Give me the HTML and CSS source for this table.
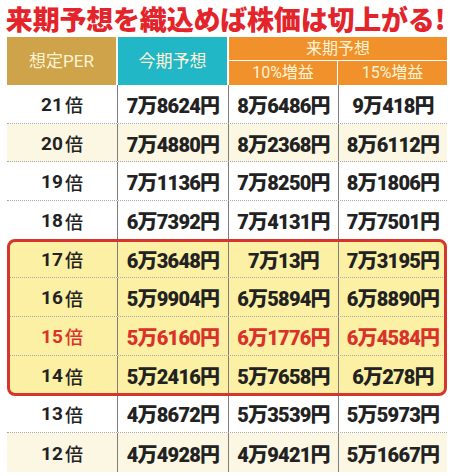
FILE: index.html
```html
<!DOCTYPE html>
<html lang="ja">
<head>
<meta charset="utf-8">
<link rel="stylesheet" href="styles.css">
</head>
<body>
<div class="page">
  <h1 class="title">来期予想を織込めば株価は切上がる!</h1>
  <div class="table">
    <div class="head">
      <div class="h h-per">想定PER</div>
      <div class="h h-now">今期予想</div>
      <div class="h-next">
        <div class="h h-next-top">来期予想</div>
        <div class="h-sub">
          <div class="h h-sub-cell">10%増益</div>
          <div class="h h-sub-cell">15%増益</div>
        </div>
      </div>
    </div>

    <div class="row"><div class="c c1">21<span class="bai">倍</span></div><div class="c">7万8624円</div><div class="c">8万6486円</div><div class="c">9万418円</div></div>
    <div class="row cream"><div class="c c1">20<span class="bai">倍</span></div><div class="c">7万4880円</div><div class="c">8万2368円</div><div class="c">8万6112円</div></div>
    <div class="row"><div class="c c1">19<span class="bai">倍</span></div><div class="c">7万1136円</div><div class="c">7万8250円</div><div class="c">8万1806円</div></div>
    <div class="row last"><div class="c c1">18<span class="bai">倍</span></div><div class="c">6万7392円</div><div class="c">7万4131円</div><div class="c">7万7501円</div></div>

    <div class="hl">
      <div class="row"><div class="c c1">17<span class="bai">倍</span></div><div class="c">6万3648円</div><div class="c">7万13円</div><div class="c">7万3195円</div></div>
      <div class="row"><div class="c c1">16<span class="bai">倍</span></div><div class="c">5万9904円</div><div class="c">6万5894円</div><div class="c">6万8890円</div></div>
      <div class="row red"><div class="c c1">15<span class="bai">倍</span></div><div class="c">5万6160円</div><div class="c">6万1776円</div><div class="c">6万4584円</div></div>
      <div class="row last"><div class="c c1">14<span class="bai">倍</span></div><div class="c">5万2416円</div><div class="c">5万7658円</div><div class="c">6万278円</div></div>
    </div>

    <div class="row"><div class="c c1">13<span class="bai">倍</span></div><div class="c">4万8672円</div><div class="c">5万3539円</div><div class="c">5万5973円</div></div>
    <div class="row cream last"><div class="c c1">12<span class="bai">倍</span></div><div class="c">4万4928円</div><div class="c">4万9421円</div><div class="c">5万1667円</div></div>
  </div>
</div>
</body>
</html>
```
FILE: styles.css
```css
* { box-sizing: border-box; }
html, body { margin: 0; padding: 0; background: #fff; }
body {
  width: 450px;
  height: 476px;
  overflow: hidden;
  font-family: "Liberation Sans", "Noto Sans CJK JP", sans-serif;
}
.page { padding: 0 3px 0 7px; }
.title {
  margin: 0 -4px 0 -7px;
  height: 37px;
  line-height: 37px;
  font-family: "Noto Sans CJK JP", sans-serif;
  font-weight: 900;
  font-size: 27px;
  color: #e3242b;
  text-align: center;
  letter-spacing: -0.2px;
  white-space: nowrap;
}
.table { width: 440px; }
.head {
  display: grid;
  grid-template-columns: 109px 109px 218px;
  column-gap: 2px;
  height: 48px;
}
.h {
  display: flex;
  align-items: center;
  justify-content: center;
  color: #fdf4d6;
  font-family: Roboto, "Noto Sans CJK JP", sans-serif;
  font-size: 16px;
  font-weight: 400;
  line-height: 1;
}
.h-per { background: #cfa349; font-size: 17px; }
.h-now { background: #22b7c6; font-size: 17px; }
.h-next {
  display: grid;
  grid-template-rows: 23px 24px;
  row-gap: 1px;
}
.h-next-top { background: #f0912b; }
.h-sub {
  display: grid;
  grid-template-columns: 108px 109px;
  column-gap: 1px;
}
.h-sub-cell { background: #f0912b; }

.row {
  display: grid;
  grid-template-columns: 110px 111px 110px 109px;
  height: 38.7px;
  border-bottom: 1px dotted #a8a8a8;
}
.row.last { border-bottom: none; }
.row.cream { background: #fcf7e3; }
.c {
  display: flex;
  align-items: center;
  justify-content: center;
  font-family: Roboto, "Noto Sans CJK JP", sans-serif;
  font-weight: 900;
  font-size: 20px;
  letter-spacing: -0.8px;
  color: #222;
  border-left: 1px solid #7d7d7d;
  padding-top: 1px;
}
.c.c1 { border-left: none; font-size: 19px; font-weight: 700; letter-spacing: 0; }
.bai {
  font-family: "Noto Sans CJK JP", sans-serif;
  font-weight: 500;
  font-size: 18px;
  margin-left: 2px;
}
.row.red .c { color: #d8322b; }

.hl {
  position: relative;
  background: #fcf0a4;
  border-radius: 8px;
}
.hl::after {
  content: "";
  position: absolute;
  inset: -1px 0 -1px 0;
  border: 3px solid #d6352c;
  border-radius: 8px;
  pointer-events: none;
}
```
